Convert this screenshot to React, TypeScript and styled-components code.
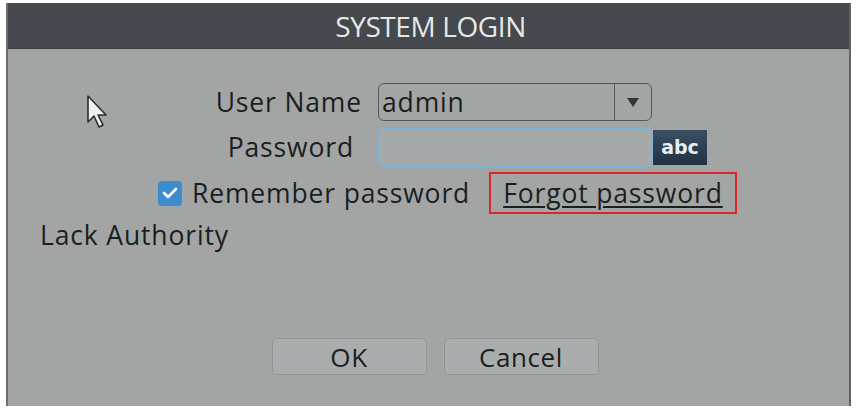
import styled, { createGlobalStyle } from "styled-components";

const GlobalStyle = createGlobalStyle`
    body {
        margin: 0;
        background: #ffffff;
        font-family: "Open Sans", "Noto Sans", sans-serif;
    }
`;

const App = () => {
    return (
        <>
            <GlobalStyle />
            <Dialog>
                <TitleBar>SYSTEM LOGIN</TitleBar>
                <Body>
                    <Pointer viewBox="0 0 24 36">
                        <path d="M2 2 L2 28 L8 22 L13 33 L17 31 L12 21 L20 21 Z" fill="#eef0f0" stroke="#2a2c2e" strokeWidth="1.6" strokeLinejoin="round" />
                    </Pointer>
                    <FieldRow>
                        <Label>User Name</Label>
                        <Select>
                            <SelectValue>admin</SelectValue>
                            <SelectArrow>
                                <svg width="12" height="9" viewBox="0 0 12 9">
                                    <path d="M0 0 L12 0 L6 9 Z" fill="#333638" />
                                </svg>
                            </SelectArrow>
                        </Select>
                    </FieldRow>
                    <FieldRow $top={7}>
                        <Label $shift={8}>Password</Label>
                        <PasswordBox />
                        <KeyboardButton>abc</KeyboardButton>
                    </FieldRow>
                    <OptionRow>
                        <CheckBox>
                            <svg width="16" height="12" viewBox="0 0 16 12">
                                <path d="M2 6 L6 10 L14 2" fill="none" stroke="#ffffff" strokeWidth="2.6" strokeLinecap="round" strokeLinejoin="round" />
                            </svg>
                        </CheckBox>
                        <OptionText>Remember password</OptionText>
                        <ForgotBox>
                            <ForgotLink>Forgot password</ForgotLink>
                        </ForgotBox>
                    </OptionRow>
                    <Notice>Lack Authority</Notice>
                    <ButtonRow>
                        <Button>OK</Button>
                        <Button>Cancel</Button>
                    </ButtonRow>
                </Body>
            </Dialog>
        </>
    );
};

const Dialog = styled.div`
    margin: 3px 0 0 6px;
    width: 845px;
    height: 403px;
    display: flex;
    flex-direction: column;
    box-sizing: border-box;
    border-left: 2px solid #6c6e70;
    border-right: 2px solid #5f6163;
`;

const TitleBar = styled.div`
    height: 46px;
    background: #45484d;
    border-bottom: 1px solid #3a3c40;
    color: #e6e8e8;
    font-size: 28px;
    letter-spacing: -0.4px;
    display: flex;
    justify-content: center;
    align-items: center;
    box-sizing: border-box;
    padding-left: 4px;
`;

const Body = styled.div`
    position: relative;
    flex: 1;
    background: #a3a5a5;
    display: flex;
    flex-direction: column;
    padding-top: 34px;
    color: #1b1e1f;
    font-size: 26.5px;
    font-weight: 500;
    letter-spacing: 0.85px;
`;

const Pointer = styled.svg`
    position: absolute;
    left: 78px;
    top: 45px;
    width: 24px;
    height: 36px;
`;

const FieldRow = styled.div<{ $top?: number }>`
    display: flex;
    align-items: center;
    margin-top: ${(p) => p.$top ?? 0}px;
    height: 38px;
`;

const Label = styled.div<{ $shift?: number }>`
    width: 354px;
    padding-right: ${(p) => p.$shift ?? 0}px;
    box-sizing: border-box;
    text-align: right;
    margin-right: 16px;
`;

const Select = styled.div`
    width: 274px;
    height: 38px;
    box-sizing: border-box;
    border: 1.5px solid #55585a;
    border-radius: 6px;
    display: flex;
    align-items: center;
`;

const SelectValue = styled.div`
    flex: 1;
    padding-left: 3px;
    line-height: 1;
`;

const SelectArrow = styled.div`
    width: 36px;
    height: 100%;
    border-left: 1.5px solid #55585a;
    display: flex;
    justify-content: center;
    align-items: center;
`;

const PasswordBox = styled.div`
    width: 275px;
    height: 39px;
    box-sizing: border-box;
    border: 1.5px solid #7fb6dc;
    border-radius: 6px;
    background: #a6a9aa;
`;

const KeyboardButton = styled.div`
    width: 54px;
    height: 35px;
    background: linear-gradient(#3a4f63, #213242);
    color: #e8eef2;
    font-family: "DejaVu Sans", sans-serif;
    font-weight: 700;
    font-size: 19px;
    letter-spacing: 0;
    display: flex;
    justify-content: center;
    align-items: center;
`;

const OptionRow = styled.div`
    display: flex;
    align-items: center;
    margin-top: 6px;
    padding-left: 150px;
    height: 42px;
`;

const CheckBox = styled.div`
    width: 24px;
    height: 25px;
    border-radius: 4px;
    background: #3c8ccd;
    display: flex;
    justify-content: center;
    align-items: center;
    margin-right: 10px;
`;

const OptionText = styled.div``;

const ForgotBox = styled.div`
    margin-left: 19px;
    height: 42px;
    box-sizing: border-box;
    border: 2px solid #d9262c;
    padding: 0 12px;
    display: flex;
    align-items: center;
`;

const ForgotLink = styled.span`
    text-decoration: underline;
    text-underline-offset: 3px;
    text-decoration-thickness: 1.5px;
`;

const Notice = styled.div`
    padding-left: 32px;
    height: 42px;
    display: flex;
    align-items: center;
`;

const ButtonRow = styled.div`
    display: flex;
    justify-content: center;
    gap: 17px;
    margin-top: auto;
    margin-bottom: 31px;
    padding-left: 13px;
`;

const Button = styled.div`
    width: 155px;
    height: 37px;
    box-sizing: border-box;
    border: 1.5px solid #909394;
    border-radius: 5px;
    background: #aaadad;
    font-size: 26px;
    letter-spacing: 0.6px;
    display: flex;
    justify-content: center;
    align-items: center;
`;

export default App;
